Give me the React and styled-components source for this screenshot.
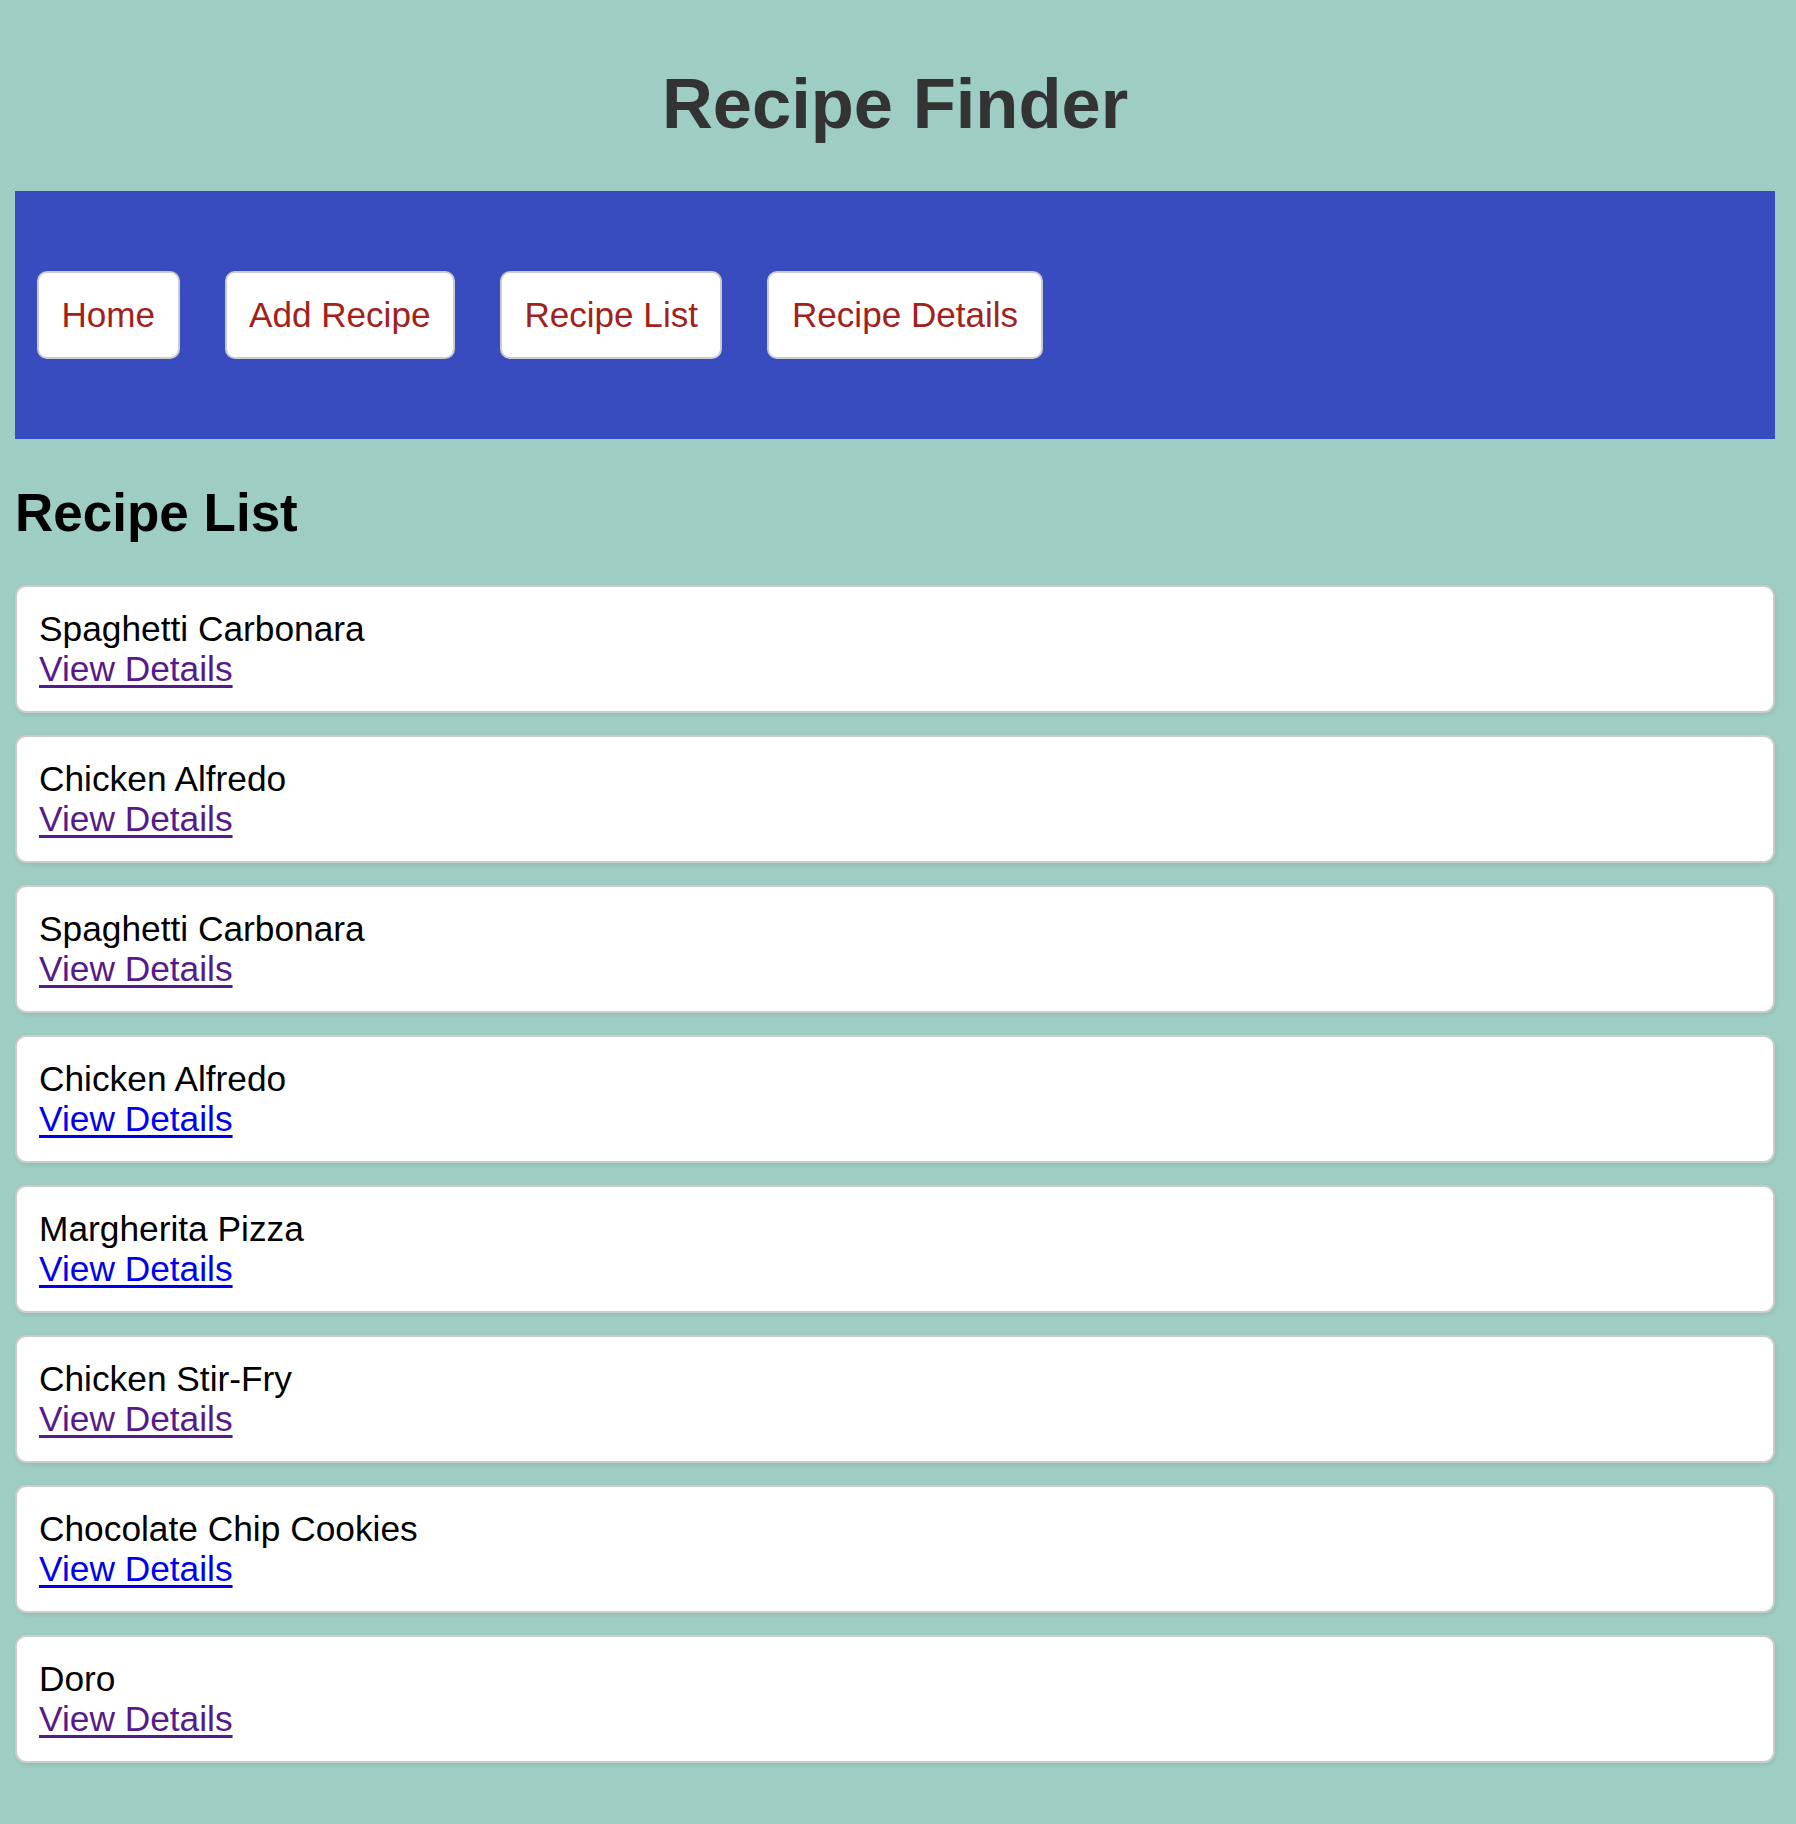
import React from 'react'
import styled, { createGlobalStyle } from 'styled-components'

const recipes = [
    { id: 1, name: 'Spaghetti Carbonara', visited: true },
    { id: 2, name: 'Chicken Alfredo', visited: true },
    { id: 3, name: 'Spaghetti Carbonara', visited: true },
    { id: 4, name: 'Chicken Alfredo', visited: false },
    { id: 5, name: 'Margherita Pizza', visited: false },
    { id: 6, name: 'Chicken Stir-Fry', visited: true },
    { id: 7, name: 'Chocolate Chip Cookies', visited: false },
    { id: 8, name: 'Doro', visited: true },
]

const links = ['Home', 'Add Recipe', 'Recipe List', 'Recipe Details']

const App = () => {
    return(
    <>
        <GlobalStyle />
        <Page>
            <Title>Recipe Finder</Title>
            <Nav>
                {links.map(l => (
                    <NavButton key={l}>{l}</NavButton>
                ))}
            </Nav>
            <Heading>Recipe List</Heading>
            <List>
                {recipes.map(r => (
                    <Card key={r.id}>
                        <Name>{r.name}</Name>
                        <DetailsLink href="#" $visited={r.visited}>View Details</DetailsLink>
                    </Card>
                ))}
            </List>
        </Page>
    </>
    )
}
//Style

const GlobalStyle = createGlobalStyle`
html, body{
    margin: 0;
    background: #9dcdc3;
}
body{
    font-family: "Liberation Sans", Arial, sans-serif;
    min-height: 1824px;
}
`

const Page = styled.div`
padding: 17px 21px 40px 15px;
`

const Title = styled.h1`
margin: 47px 0;
text-align: center;
font-size: 70.5px;
line-height: 80px;
font-weight: bold;
color: #333333;
`

const Nav = styled.nav`
display: flex;
align-items: center;
gap: 45px;
padding: 80px 22px;
background: #384bbf;
`

const NavButton = styled.button`
font-family: "Liberation Sans", Arial, sans-serif;
font-size: 35.1px;
line-height: 40px;
padding: 22px 22.5px;
background: #ffffff;
color: #a3211b;
border: 2px solid #cccccc;
border-radius: 10px;
cursor: pointer;
`

const Heading = styled.h2`
margin: 44px 0 42px;
font-size: 53px;
line-height: 60px;
font-weight: bold;
color: #000000;
`

const List = styled.div`
display: flex;
flex-direction: column;
gap: 22px;
`

const Card = styled.div`
display: flex;
flex-direction: column;
align-items: flex-start;
padding: 22px;
background: #ffffff;
border: 2px solid #cccccc;
border-radius: 11px;
box-shadow: 1px 2px 4px rgba(0, 0, 0, 0.08);
`

const Name = styled.span`
font-size: 35.3px;
line-height: 40px;
color: #000000;
`

const DetailsLink = styled.a`
font-size: 35.3px;
line-height: 40px;
color: ${p => p.$visited ? '#551a8b' : '#0000ee'};
text-decoration: underline;
text-decoration-thickness: 3px;
text-underline-offset: 4px;
`

export default App
